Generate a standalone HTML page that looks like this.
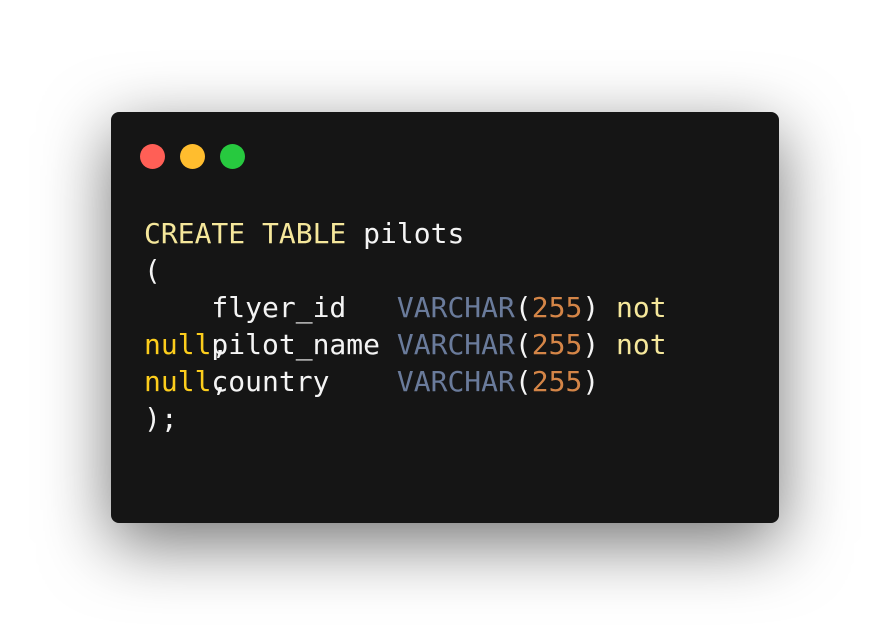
<!DOCTYPE html>
<html><head><style>
html,body{margin:0;padding:0;width:890px;height:636px;background:#fff;overflow:hidden}
.win{position:absolute;left:111px;top:112px;width:668px;height:411px;background:#151515;border-radius:8px;box-shadow:0 20px 68px rgba(0,0,0,0.55)}
.dot{position:absolute;top:32px;width:25px;height:25px;border-radius:50%}
.l{position:absolute;left:33px;font-family:"DejaVu Sans Mono","Liberation Mono",monospace;font-size:28px;line-height:37px;color:#f4f4f4;white-space:pre}
.k{color:#f5e79b}.n{color:#fccd1c}.t{color:#6a7b9b}.o{color:#d48547}
</style></head><body>
<div class="win">
<div class="dot" style="left:29px;background:#ff5f56"></div>
<div class="dot" style="left:69px;background:#ffbd2e"></div>
<div class="dot" style="left:109px;background:#27c93f"></div>
<div class="l" style="top:103px"><span class="k">CREATE TABLE</span> pilots</div>
<div class="l" style="top:140px">(</div>
<div class="l" style="top:177px">    flyer_id   <span class="t">VARCHAR</span>(<span class="o">255</span>) <span class="k">not</span></div>
<div class="l" style="top:214px"><span class="n">null</span>,</div>
<div class="l" style="top:214px">    pilot_name <span class="t">VARCHAR</span>(<span class="o">255</span>) <span class="k">not</span></div>
<div class="l" style="top:251px"><span class="n">null</span>,</div>
<div class="l" style="top:251px">    country    <span class="t">VARCHAR</span>(<span class="o">255</span>)</div>
<div class="l" style="top:288px">);</div>
</div>
</body></html>
